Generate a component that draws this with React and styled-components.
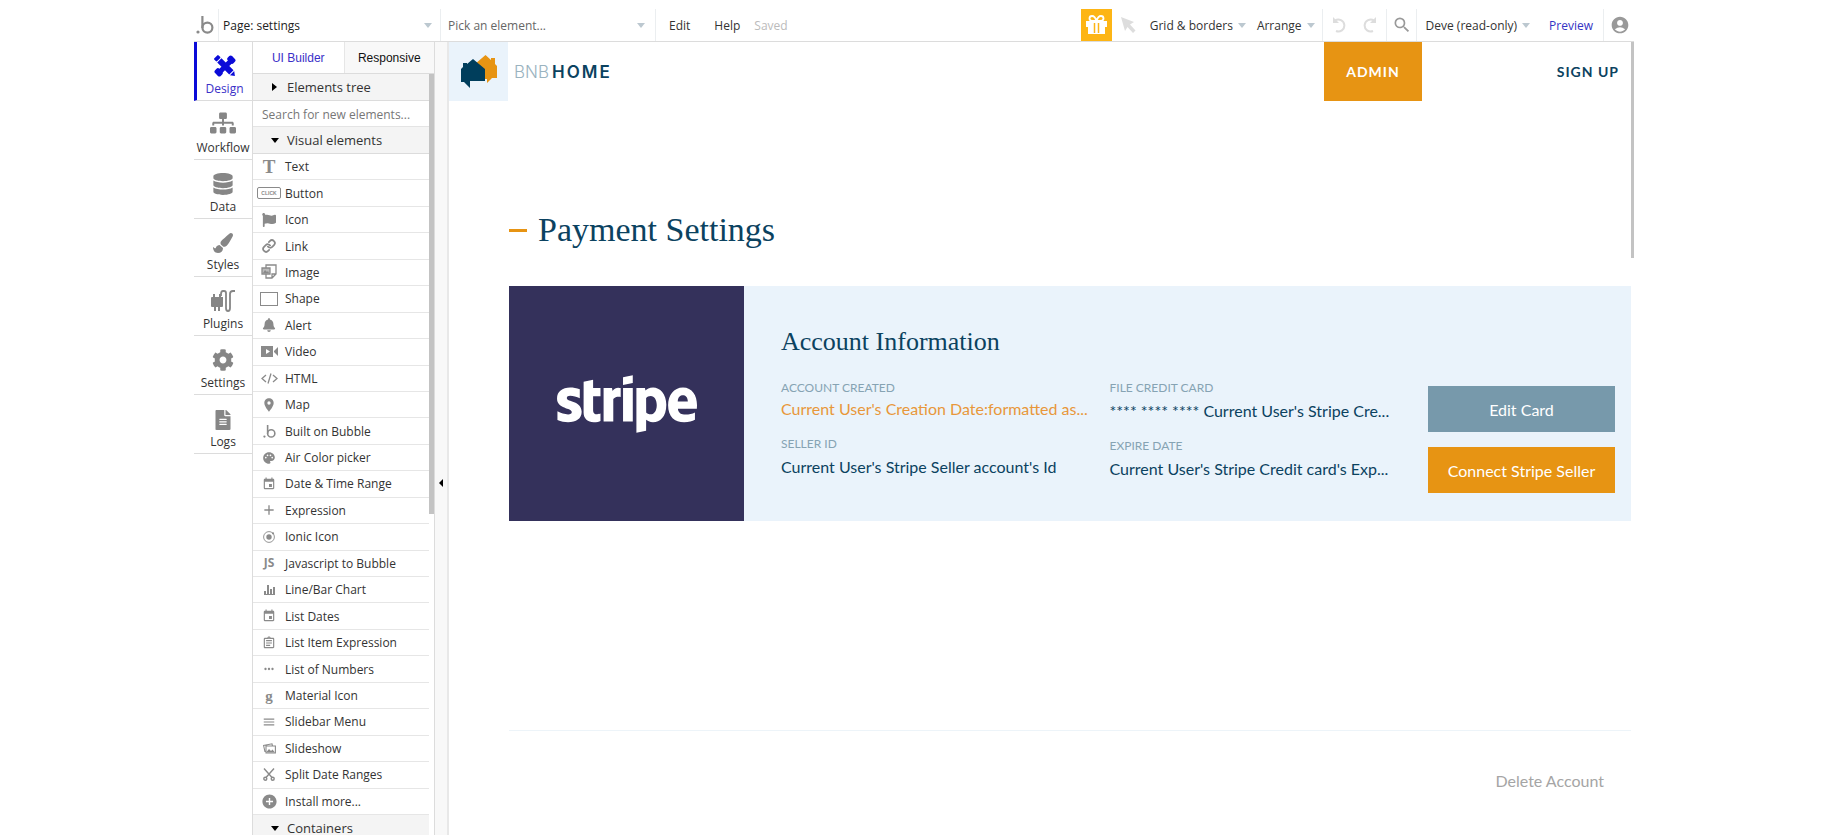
import React from 'react';
import styled, { createGlobalStyle } from 'styled-components';
import {
  FaSitemap, FaDatabase, FaPaintBrush, FaCog, FaFileAlt, FaFlag, FaBell, FaStripe,
} from 'react-icons/fa';
import {
  MdPlace, MdPalette, MdEvent, MdAdd, MdOutlineAssignment, MdMoreHoriz, MdMenu, MdAddCircle,
  MdSearch, MdAccountCircle,
} from 'react-icons/md';
import { FiLink } from 'react-icons/fi';

const GlobalStyle = createGlobalStyle`
  * {
    box-sizing: border-box;
  }
  body {
    margin: 0;
    background: #fff;
    color: #222;
    font-family: "Open Sans", "Noto Sans", sans-serif;
    font-size: 12px;
  }
  button, input, select {
    margin: 0;
    padding: 0;
    border: 0;
    background: none;
    color: inherit;
    font: inherit;
    outline: none;
  }
  button {
    cursor: pointer;
  }
  a {
    text-decoration: none;
  }
`;

const Page = styled.div`
  display: flex;
  flex-direction: column;
  height: 100vh;
  padding: 9px 196px 5px 194px;
  overflow: hidden;
`;

/* top bar */

const Toolbar = styled.header`
  display: flex;
  flex: none;
  height: 33px;
  border-bottom: 1px solid #dcdcdc;
`;

const Cell = styled.div`
  display: flex;
  align-items: center;
  gap: ${p => p.$gap || 0}px;
  padding: 0 ${p => p.$right || 0}px 0 ${p => p.$left || 0}px;
  border-right: ${p => (p.$line ? '1px solid #ebeef0' : '0')};
  white-space: nowrap;
`;

const Picker = styled.label`
  display: flex;
  align-items: center;
  width: ${p => p.$width}px;
  padding: 0 ${p => p.$right}px 0 ${p => p.$left}px;
  border-right: 1px solid #ebeef0;
`;

const Select = styled.select`
  flex: 1;
  min-width: 0;
  height: 24px;
  appearance: none;
  color: ${p => p.$color || '#222'};
`;

const Spacer = styled.div`
  flex: 1;
`;

const MenuButton = styled.button`
  display: flex;
  align-items: center;
  gap: 5px;
  color: ${p => p.$color || '#333'};
`;

const Caret = styled.span`
  flex: none;
  border: 4px solid transparent;
  border-top: 5px solid #bcc8d0;
  border-bottom: 0;
`;

const GiftButton = styled.button`
  display: flex;
  align-items: center;
  justify-content: center;
  width: 31px;
  background: #fdb515;
  color: #fff;
`;

const IconButton = styled.button`
  display: flex;
  color: ${p => p.$color || '#999'};
  font-size: 20px;
`;

const PreviewLink = styled.a`
  color: #3434c4;
`;

/* work area */

const Body = styled.div`
  display: flex;
  flex: 1;
  min-height: 0;
`;

const Nav = styled.nav`
  flex: none;
  width: 59px;
  border-right: 1px solid #dcdcdc;
`;

const NavList = styled.div`
  display: grid;
  grid-auto-rows: 1fr;
  height: 412px;
`;

const NavItem = styled.button`
  display: flex;
  flex-direction: column;
  align-items: center;
  justify-content: flex-end;
  gap: 3px;
  padding: 0 0 2px;
  border-bottom: 1px solid #dcdcdc;
  border-left: ${p => (p.$active ? '3px solid #0b0bd8' : '0')};
  color: ${p => (p.$active ? '#3a30c8' : '#333')};
  line-height: 18px;

  svg {
    color: ${p => (p.$active ? '#0b0bd8' : '#868686')};
    font-size: ${p => p.$size || 22}px;
  }
`;

const Panel = styled.aside`
  display: flex;
  flex: none;
  flex-direction: column;
  width: 182px;
  border-right: 1px solid #dcdcdc;
`;

const Tabs = styled.div`
  display: grid;
  flex: none;
  grid-template-columns: 1fr 1fr;
  height: 32px;
  border-bottom: 1px solid #dcdcdc;
`;

const Tab = styled.button`
  border-left: ${p => (p.$active ? '0' : '1px solid #e6e6e6')};
  background: ${p => (p.$active ? '#fff' : '#f8f8f8')};
  color: ${p => (p.$active ? '#3a30c8' : '#111')};
  font-family: "Liberation Sans", Arial, sans-serif;
`;

const PanelBody = styled.div`
  display: flex;
  flex: 1;
  align-items: flex-start;
  min-height: 0;
  overflow: hidden;
`;

const PanelList = styled.div`
  flex: 1;
  min-width: 0;
`;

const PanelThumb = styled.div`
  width: 5px;
  height: 440px;
  background: #c3c3c3;
`;

const Section = styled.button`
  display: flex;
  align-items: center;
  gap: 8px;
  width: 100%;
  height: 27px;
  padding-left: 17px;
  border-bottom: 1px solid #dcdcdc;
  background: #f4f4f4;
  color: #333;
  font-size: 13px;
  line-height: 13px;
`;

const SectionMark = styled.span`
  display: flex;
  justify-content: center;
  width: 9px;

  &::before {
    content: '';
    border: 4px solid transparent;
    ${p => (p.$open
    ? 'border-top: 5px solid #000; border-bottom: 0;'
    : 'border-left: 5px solid #000; border-right: 0;')}
  }
`;

const Search = styled.input`
  display: block;
  width: 100%;
  height: 26px;
  padding: 2px 0 0 9px;
  border-bottom: 1px solid #e4e4e4;

  &::placeholder {
    color: #777;
    opacity: 1;
  }
`;

const Elements = styled.div`
  display: grid;
  grid-auto-rows: 1fr;
  height: 661px;
`;

const ElementRow = styled.button`
  display: flex;
  align-items: center;
  gap: 4px;
  min-height: 0;
  padding-left: 4px;
  border-bottom: 1px solid #e6e6e6;
  color: #333;
  text-align: left;
`;

const ElementIcon = styled.span`
  display: flex;
  align-items: center;
  justify-content: center;
  width: 24px;
  height: 20px;
  color: #8a8a8a;
  font-size: ${p => p.$size || 14}px;
`;

const ClickIcon = styled.span`
  width: 24px;
  border: 1px solid #8a8a8a;
  border-radius: 2px;
  color: #8a8a8a;
  font: bold 5px/10px "Liberation Sans", Arial, sans-serif;
  text-align: center;
`;

const ShapeIcon = styled.span`
  width: 18px;
  height: 14px;
  border: 1px solid #8a8a8a;
`;

const LetterIcon = styled.span`
  font: bold ${p => p.$size}px/18px ${p => (p.$serif ? '"Liberation Serif", serif' : '"Open Sans", sans-serif')};
`;

const Gutter = styled.button`
  display: flex;
  flex: none;
  align-items: center;
  justify-content: center;
  width: 14px;
  padding: 88px 0 0;
  border-right: 2px solid #e8e8e8;
  background: #f8f8f8;
  align-self: stretch;

  &::before {
    content: '';
    border: 4px solid transparent;
    border-right: 4px solid #000;
    border-left: 0;
  }
`;

/* page being edited */

const Canvas = styled.main`
  flex: 1;
  min-width: 0;
  color: #0b4260;
  font-family: Lato, "Open Sans", sans-serif;
`;

const CanvasThumb = styled.div`
  width: 3px;
  height: 216px;
  background: #c3c3c3;
`;

const SiteHeader = styled.div`
  display: flex;
  align-items: center;
  height: 59px;
`;

const LogoBox = styled.div`
  display: flex;
  align-items: center;
  justify-content: center;
  width: 59px;
  height: 59px;
  background: #eaf3fb;
`;

const Brand = styled.div`
  display: flex;
  gap: 3px;
  flex: 1;
  padding-left: 6px;
  color: #9ab3c0;
  font: 300 17px/24px Inter, sans-serif;

  strong {
    color: #0b4260;
    font-weight: 600;
    letter-spacing: 2px;
  }
`;

const AdminLink = styled.a`
  display: flex;
  align-items: center;
  justify-content: center;
  width: 98px;
  height: 59px;
  background: #e79413;
  color: #fff;
  font-size: 14px;
  font-weight: 700;
  letter-spacing: 1px;
`;

const SignUpLink = styled.a`
  width: 209px;
  padding-right: 12px;
  color: #0b4260;
  font-size: 14px;
  font-weight: 700;
  letter-spacing: 1px;
  text-align: right;
`;

const Content = styled.div`
  padding: 109px 0 0 60px;
`;

const Title = styled.h1`
  display: flex;
  align-items: center;
  gap: 11px;
  margin: 0 0 36px;
  font: 400 34px/40px "Liberation Serif", serif;

  &::before {
    content: '';
    width: 18px;
    height: 3px;
    background: #e79413;
  }
`;

const Card = styled.section`
  display: flex;
  height: 235px;
  background: #eaf3fb;
`;

const StripeBox = styled.div`
  display: flex;
  flex: none;
  align-items: center;
  justify-content: center;
  width: 235px;
  background: #34315b;
  color: #fff;
  font-size: 140px;
`;

const CardBody = styled.div`
  flex: 1;
  min-width: 0;
  padding: 40px 16px 0 37px;
`;

const CardTitle = styled.h2`
  margin: 0 0 22px;
  font: 400 26px/32px "Liberation Serif", serif;
`;

const CardGrid = styled.div`
  display: grid;
  grid-template-columns: 328fr 318fr 187px;
`;

const Fields = styled.dl`
  display: flex;
  flex-direction: column;
  gap: 17px;
  min-width: 0;
  margin: 0;
`;

const Field = styled.div`
  display: flex;
  flex-direction: column;
  gap: ${p => p.$gap || 5}px;
  white-space: nowrap;
`;

const FieldLabel = styled.dt`
  color: #86a3b3;
  font-size: 12px;
  line-height: 16px;
`;

const FieldValue = styled.dd`
  margin: 0;
  color: ${p => (p.$accent ? '#e8973a' : '#0b4260')};
  font-size: 16px;
  line-height: 20px;
`;

const Actions = styled.div`
  display: flex;
  flex-direction: column;
  gap: 15px;
  padding-top: 6px;
`;

const ActionButton = styled.button`
  height: 46px;
  background: ${p => (p.$primary ? '#e79413' : '#7799ab')};
  color: #fff;
  font-size: 16px;
`;

const Footer = styled.div`
  display: flex;
  justify-content: flex-end;
  margin-top: 209px;
  padding: 40px 27px 0 0;
  border-top: 1px solid #edf4f9;
`;

const DeleteButton = styled.button`
  color: #a5a5a5;
  font-size: 16px;
  line-height: 20px;
`;

/* icons */

function BubbleIcon({ size = 18 }) {
  return (
    <svg width={size} height={size} viewBox="0 0 18 18" fill="none" stroke="#8a8a8a" strokeWidth="2.2">
      <circle cx="11.4" cy="11.6" r="5" />
      <path d="M6.4 0v12" />
      <circle cx="2" cy="16" r="1.6" fill="#8a8a8a" stroke="none" />
    </svg>
  );
}

function DesignIcon() {
  return (
    <svg width="22" height="22" viewBox="0 0 22 22" fill="currentColor">
      <g transform="rotate(45 11 11)">
        <rect x="-2" y="8" width="4" height="6" rx="1" />
        <path d="M3 8h17v6H3zM21 8l4 3-4 3z" />
      </g>
      <g transform="rotate(-45 11 11)">
        <rect x="-1" y="7" width="6" height="8" rx="2" />
        <rect x="4" y="9" width="14" height="5" />
        <rect x="17" y="7" width="6" height="8" rx="2" />
      </g>
    </svg>
  );
}

function PluginsIcon() {
  return (
    <svg width="24" height="22" viewBox="0 0 24 22" fill="none" stroke="currentColor" strokeWidth="1.8">
      <path d="M0 8q0-1 1-1h1V4h2v3h4V4h2v3h2v9q0 1-1 1H9v4H7v-4H5v4H3v-4H1q-1 0-1-1z" fill="currentColor" stroke="none" />
      <path d="M10 6V4q0-3 2-3h1q2 0 2 2v15q0 3 2 3t2-3V4q0-3 3-3h2" />
    </svg>
  );
}

function ImageIcon() {
  return (
    <svg width="16" height="16" viewBox="0 0 16 16" fill="none" stroke="currentColor" strokeWidth="1.3">
      <path d="M5 4V1h10v9l-4 4H5v-4M15 10h-4v4" />
      <path d="M1 4h8v6H1z" fill="#bbb" />
      <path d="M2 9l2-3 2 2 1-1 1 2z" fill="currentColor" stroke="none" />
    </svg>
  );
}

function VideoIcon() {
  return (
    <svg width="17" height="13" viewBox="0 0 17 13">
      <path d="M0 1h12v11H0zM13 6l4-4v9l-4-4z" fill="currentColor" />
      <path d="M5 4l4 2.5L5 9z" fill="#fff" />
    </svg>
  );
}

function CodeIcon() {
  return (
    <svg width="17" height="11" viewBox="0 0 17 11" fill="none" stroke="currentColor" strokeWidth="1.3">
      <path d="M5 2L1 5.5 5 9M12 2l4 3.5L12 9M10 .5l-3 10" />
    </svg>
  );
}

function IonicIcon() {
  return (
    <svg width="12" height="12" viewBox="0 0 12 12" fill="none" stroke="currentColor">
      <circle cx="6" cy="6" r="5.4" strokeWidth=".9" />
      <circle cx="6" cy="6" r="2.7" fill="currentColor" stroke="none" />
      <circle cx="10" cy="2.3" r="1.1" fill="currentColor" stroke="none" />
    </svg>
  );
}

function ChartIcon() {
  return (
    <svg width="11" height="11" viewBox="0 0 11 11" fill="currentColor">
      <path d="M0 7h2v3H0zM3 1h2v9H3zM6 5h2v5H6zM9 3h2v7H9zM0 10h11v1H0z" />
    </svg>
  );
}

function SlideshowIcon() {
  return (
    <svg width="13" height="11" viewBox="0 0 13 11" fill="none" stroke="currentColor" strokeWidth="1.1">
      <path d="M3 3h9.4v7H3zM2 9L.6 2.5 9 .8l.5 2" />
      <path d="M3 9.5L6 6l2 2 1.500-1.500L12 9.500z" fill="currentColor" stroke="none" />
    </svg>
  );
}

function SplitIcon() {
  return (
    <svg width="12" height="13" viewBox="0 0 12 13" fill="none" stroke="currentColor" strokeWidth="1.4">
      <path d="M1 .5l8 9M11 .5l-8 9" />
      <circle cx="2.3" cy="10.8" r="1.5" />
      <circle cx="9.7" cy="10.8" r="1.5" />
    </svg>
  );
}

function GiftIcon() {
  return (
    <svg width="21" height="20" viewBox="0 0 21 20" fill="none" stroke="currentColor" strokeWidth="1.8">
      <path d="M10.5 6Q9 1 6 1 3.5 1 3.5 3.5T7 6zM10.5 6Q12 1 15 1q2.5 0 2.5 2.5T14 6z" />
      <path d="M0 6h21v6h-2v7H2v-7H0z" fill="currentColor" stroke="none" />
      <path d="M8.5 8v10M12.5 8v10" stroke="#fdb515" strokeWidth="1.5" />
    </svg>
  );
}

function CursorIcon() {
  return (
    <svg width="15" height="16" viewBox="0 0 15 16" fill="currentColor">
      <path d="M0 0l13 5-4 2.5 5.5 6-2.5 2.5-5.5-6L4 14z" />
    </svg>
  );
}

function UndoIcon({ flip }) {
  return (
    <svg width="15" height="16" viewBox="0 0 15 16" fill="none" stroke="currentColor" strokeWidth="2">
      <g transform={flip ? 'matrix(-1 0 0 1 15 0)' : undefined}>
        <path d="M3 3.5a6 6 0 1 1 1 10.5" />
        <path d="M1 0v6h6z" fill="currentColor" stroke="none" />
      </g>
    </svg>
  );
}

function HomesIcon() {
  return (
    <svg width="36" height="33" viewBox="0 0 36 33">
      <path d="M14 9L24.5 0 30 5V3h4v6l2 2v12h-5l-5 5v-4h-9z" fill="#e79413" />
      <path d="M0 14l2-2V8h4v1l6-5 12 10v12H9v7l-6-6H0z" fill="#003e5c" />
    </svg>
  );
}

const navItems = [
  { label: 'Design', icon: <DesignIcon />, active: true },
  { label: 'Workflow', icon: <FaSitemap />, size: 26 },
  { label: 'Data', icon: <FaDatabase /> },
  { label: 'Styles', icon: <FaPaintBrush />, size: 20 },
  { label: 'Plugins', icon: <PluginsIcon /> },
  { label: 'Settings', icon: <FaCog /> },
  { label: 'Logs', icon: <FaFileAlt />, size: 20 },
];

const elements = [
  { label: 'Text', icon: <LetterIcon $size={19} $serif>T</LetterIcon> },
  { label: 'Button', icon: <ClickIcon>CLICK</ClickIcon> },
  { label: 'Icon', icon: <FaFlag /> },
  { label: 'Link', icon: <FiLink strokeWidth={3} /> },
  { label: 'Image', icon: <ImageIcon /> },
  { label: 'Shape', icon: <ShapeIcon /> },
  { label: 'Alert', icon: <FaBell /> },
  { label: 'Video', icon: <VideoIcon /> },
  { label: 'HTML', icon: <CodeIcon /> },
  { label: 'Map', icon: <MdPlace />, size: 16 },
  { label: 'Built on Bubble', icon: <BubbleIcon size={13} /> },
  { label: 'Air Color picker', icon: <MdPalette /> },
  { label: 'Date & Time Range', icon: <MdEvent /> },
  { label: 'Expression', icon: <MdAdd />, size: 16 },
  { label: 'Ionic Icon', icon: <IonicIcon /> },
  { label: 'Javascript to Bubble', icon: <LetterIcon $size={12}>JS</LetterIcon> },
  { label: 'Line/Bar Chart', icon: <ChartIcon /> },
  { label: 'List Dates', icon: <MdEvent /> },
  { label: 'List Item Expression', icon: <MdOutlineAssignment /> },
  { label: 'List of Numbers', icon: <MdMoreHoriz /> },
  { label: 'Material Icon', icon: <LetterIcon $size={15} $serif>g</LetterIcon> },
  { label: 'Slidebar Menu', icon: <MdMenu /> },
  { label: 'Slideshow', icon: <SlideshowIcon /> },
  { label: 'Split Date Ranges', icon: <SplitIcon /> },
  { label: 'Install more...', icon: <MdAddCircle />, size: 17 },
];

function TopBar() {
  return (
    <Toolbar>
      <Cell $left={2} $right={4} $line>
        <BubbleIcon />
      </Cell>
      <Picker $width={222} $left={4} $right={8}>
        <Select aria-label="Page" defaultValue="settings">
          <option value="settings">Page: settings</option>
        </Select>
        <Caret />
      </Picker>
      <Picker $width={215} $left={7} $right={10}>
        <Select aria-label="Element" $color="#666" defaultValue="">
          <option value="">Pick an element...</option>
        </Select>
        <Caret />
      </Picker>
      <Cell $left={13} $gap={24}>
        <MenuButton>Edit</MenuButton>
        <MenuButton>Help</MenuButton>
      </Cell>
      <Cell $left={14}>
        <MenuButton $color="#bbb">Saved</MenuButton>
      </Cell>
      <Spacer />
      <GiftButton aria-label="Gifts"><GiftIcon /></GiftButton>
      <Cell $left={9} $right={14}>
        <IconButton aria-label="Pointer" $color="#ddd"><CursorIcon /></IconButton>
      </Cell>
      <Cell $gap={11} $right={7} $line>
        <MenuButton>Grid &amp; borders<Caret /></MenuButton>
        <MenuButton>Arrange<Caret /></MenuButton>
      </Cell>
      <Cell $left={9} $right={9} $gap={15} $line>
        <IconButton aria-label="Undo" $color="#ddd"><UndoIcon /></IconButton>
        <IconButton aria-label="Redo" $color="#ddd"><UndoIcon flip /></IconButton>
      </Cell>
      <Cell $left={5} $right={4} $line>
        <IconButton aria-label="Search"><MdSearch /></IconButton>
      </Cell>
      <Cell $left={9} $right={10} $gap={19} $line>
        <MenuButton>Deve (read-only)<Caret /></MenuButton>
        <PreviewLink href="#preview">Preview</PreviewLink>
      </Cell>
      <Cell $left={6} $right={4}>
        <IconButton aria-label="Account"><MdAccountCircle /></IconButton>
      </Cell>
    </Toolbar>
  );
}

function ElementsPanel() {
  return (
    <Panel>
      <Tabs>
        <Tab $active>UI Builder</Tab>
        <Tab>Responsive</Tab>
      </Tabs>
      <PanelBody>
        <PanelList>
          <Section><SectionMark />Elements tree</Section>
          <Search type="text" aria-label="Search for new elements" placeholder="Search for new elements..." />
          <Section><SectionMark $open />Visual elements</Section>
          <Elements>
            {elements.map(item => (
              <ElementRow key={item.label}>
                <ElementIcon $size={item.size}>{item.icon}</ElementIcon>
                {item.label}
              </ElementRow>
            ))}
          </Elements>
          <Section><SectionMark $open />Containers</Section>
        </PanelList>
        <PanelThumb />
      </PanelBody>
    </Panel>
  );
}

function PaymentCard() {
  return (
    <Card>
      <StripeBox><FaStripe title="stripe" /></StripeBox>
      <CardBody>
        <CardTitle>Account Information</CardTitle>
        <CardGrid>
          <Fields>
            <Field $gap={3}>
              <FieldLabel>ACCOUNT CREATED</FieldLabel>
              <FieldValue $accent>Current User's Creation Date:formatted as...</FieldValue>
            </Field>
            <Field>
              <FieldLabel>SELLER ID</FieldLabel>
              <FieldValue>Current User's Stripe Seller account's Id</FieldValue>
            </Field>
          </Fields>
          <Fields>
            <Field>
              <FieldLabel>FILE CREDIT CARD</FieldLabel>
              <FieldValue>**** **** **** Current User's Stripe Cre...</FieldValue>
            </Field>
            <Field>
              <FieldLabel>EXPIRE DATE</FieldLabel>
              <FieldValue>Current User's Stripe Credit card's Exp...</FieldValue>
            </Field>
          </Fields>
          <Actions>
            <ActionButton>Edit Card</ActionButton>
            <ActionButton $primary>Connect Stripe Seller</ActionButton>
          </Actions>
        </CardGrid>
      </CardBody>
    </Card>
  );
}

function App() {
  return (
    <Page>
      <GlobalStyle />
      <TopBar />
      <Body>
        <Nav>
          <NavList>
            {navItems.map(item => (
              <NavItem key={item.label} $active={item.active} $size={item.size}>
                {item.icon}
                {item.label}
              </NavItem>
            ))}
          </NavList>
        </Nav>
        <ElementsPanel />
        <Gutter aria-label="Collapse panel" />
        <Canvas>
          <SiteHeader>
            <LogoBox><HomesIcon /></LogoBox>
            <Brand>BNB<strong>HOME</strong></Brand>
            <AdminLink href="#admin">ADMIN</AdminLink>
            <SignUpLink href="#signup">SIGN UP</SignUpLink>
          </SiteHeader>
          <Content>
            <Title>Payment Settings</Title>
            <PaymentCard />
            <Footer>
              <DeleteButton>Delete Account</DeleteButton>
            </Footer>
          </Content>
        </Canvas>
        <CanvasThumb />
      </Body>
    </Page>
  );
}

export default App;
